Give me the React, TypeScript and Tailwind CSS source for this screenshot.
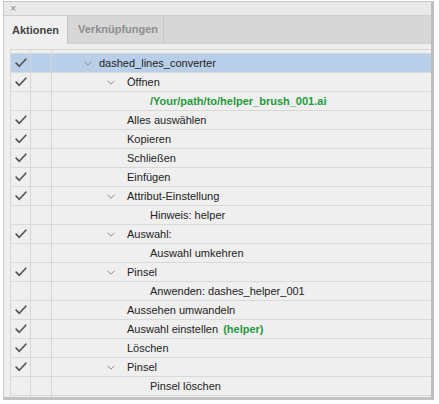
import React from "react";

type Row = {
  check: boolean;
  level: 0 | 1 | 2;
  chevron?: boolean;
  text: string;
  green?: boolean;
  suffix?: string;
  selected?: boolean;
};

const rows: Row[] = [
  { check: true, level: 0, chevron: true, text: "dashed_lines_converter", selected: true },
  { check: true, level: 1, chevron: true, text: "Öffnen" },
  { check: false, level: 2, text: "/Your/path/to/helper_brush_001.ai", green: true },
  { check: true, level: 1, text: "Alles auswählen" },
  { check: true, level: 1, text: "Kopieren" },
  { check: true, level: 1, text: "Schließen" },
  { check: true, level: 1, text: "Einfügen" },
  { check: true, level: 1, chevron: true, text: "Attribut-Einstellung" },
  { check: false, level: 2, text: "Hinweis: helper" },
  { check: true, level: 1, chevron: true, text: "Auswahl:" },
  { check: false, level: 2, text: "Auswahl umkehren" },
  { check: true, level: 1, chevron: true, text: "Pinsel" },
  { check: false, level: 2, text: "Anwenden: dashes_helper_001" },
  { check: true, level: 1, text: "Aussehen umwandeln" },
  { check: true, level: 1, text: "Auswahl einstellen", suffix: "(helper)" },
  { check: true, level: 1, text: "Löschen" },
  { check: true, level: 1, chevron: true, text: "Pinsel" },
  { check: false, level: 2, text: "Pinsel löschen" },
];

function Check() {
  return (
    <svg width="12" height="10" viewBox="0 0 12 10">
      <path d="M1.2 5.2 L4.3 8.3 L10.8 1.2" fill="none" stroke="#555555" strokeWidth="1.7" strokeLinecap="round" strokeLinejoin="round" />
    </svg>
  );
}

function Chevron() {
  return (
    <svg width="8" height="5" viewBox="0 0 8 5">
      <path d="M0.5 0.7 L4 4.2 L7.5 0.7" fill="none" stroke="#8a8a8a" strokeWidth="1" />
    </svg>
  );
}

const textPad: Record<number, string> = {
  0: "pl-[47px]",
  1: "pl-[75px]",
  2: "pl-[98px]",
};
const chevPos: Record<number, string> = {
  0: "left-[32px]",
  1: "left-[55px]",
  2: "left-[78px]",
};

export default function App() {
  return (
    <div
      className="w-[439px] h-[404px] bg-white relative overflow-hidden"
      style={{ fontFamily: '"Liberation Sans", Arial, sans-serif' }}
    >
      <div className="ml-[3px] mt-[1px] w-[431px] h-[399px] bg-[#efefef] border border-[#c9c9c9] border-r-[3px] border-r-[#bdbdbd] border-b-[3px] border-b-[#c2c2c2] flex flex-col">
        {/* top bar */}
        <div className="h-[14px] bg-[#e9e9e9] border-b border-[#cfcfcf] flex items-center pl-[6px]">
          <span className="text-[11px] leading-none text-[#8a8a8a]">×</span>
        </div>
        {/* tabs */}
        <div className="h-[28px] bg-[#d7d7d7] flex border-b border-[#cfcfcf]">
          <div className="w-[64px] bg-[#efefef] border-r border-[#c4c4c4] flex items-center pl-[8px] text-[11px] font-bold text-[#454545] -mb-px">
            Aktionen
          </div>
          <div className="w-[96px] border-r border-[#c4c4c4] flex items-center pl-[10px] text-[11px] font-bold text-[#8e8e8e]">
            Verknüpfungen
          </div>
        </div>
        {/* table */}
        <div className="ml-[6px] mt-[5px] border-t border-l border-[#d6d6d6] flex-1 flex flex-col">
          <div className="h-[4px] flex border-b border-[#d6d6d6]">
            <div className="w-[20px] border-r border-[#d6d6d6]" />
            <div className="w-[21px] border-r border-[#d6d6d6]" />
            <div className="flex-1" />
          </div>
          {rows.map((r, i) => (
            <div
              key={i}
              className={`h-[19px] flex border-b border-[#d9d9d9] ${r.selected ? "bg-[#b9cfe9]" : ""}`}
            >
              <div className="w-[20px] border-r border-[#d6d6d6] flex items-center justify-center">
                {r.check ? <Check /> : null}
              </div>
              <div className="w-[21px] border-r border-[#d6d6d6]" />
              <div className={`flex-1 relative flex items-center text-[11px] text-[#222222] ${textPad[r.level]}`}>
                {r.chevron ? (
                  <span className={`absolute top-[7px] ${chevPos[r.level]}`}>
                    <Chevron />
                  </span>
                ) : null}
                <span className={r.green ? "font-bold text-[#1f9a3c]" : ""}>{r.text}</span>
                {r.suffix ? <span className="ml-[5px] font-bold text-[#1f9a3c]">{r.suffix}</span> : null}
              </div>
            </div>
          ))}
          <div className="flex-1 flex">
            <div className="w-[20px] border-r border-[#d6d6d6]" />
            <div className="w-[21px] border-r border-[#d6d6d6]" />
          </div>
        </div>
      </div>
    </div>
  );
}
